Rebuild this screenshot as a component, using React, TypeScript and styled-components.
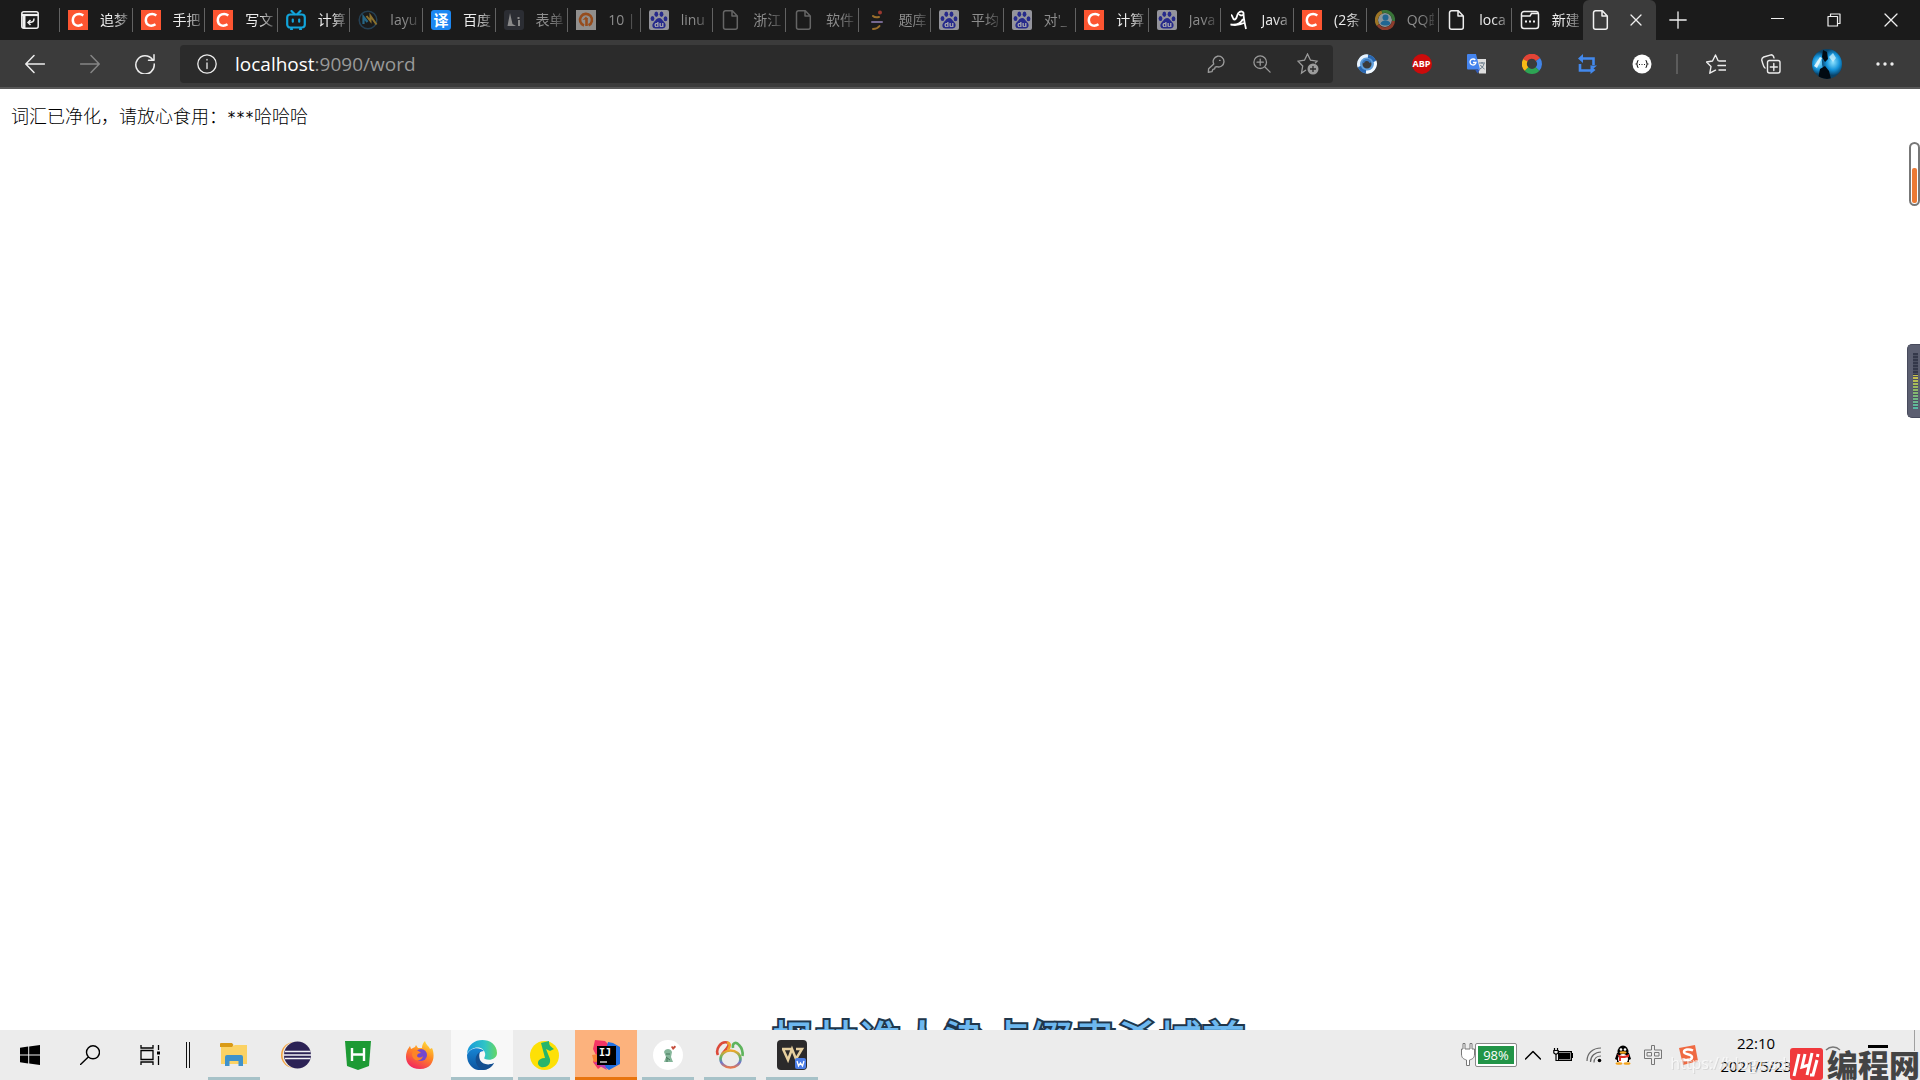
import React from 'react';
import styled, { createGlobalStyle } from 'styled-components';

const cjk = '"Noto Sans CJK SC", sans-serif';
const ui = `"Open Sans", ${cjk}`;

const GlobalStyle = createGlobalStyle`
  * { box-sizing: border-box; }
  body { margin: 0; background: #fff; font-family: ${ui}; }
  button { border: 0; padding: 0; background: none; font: inherit; color: inherit; }
  svg { display: block; flex: none; }
`;

const Screen = styled.div`
  display: flex;
  flex-direction: column;
  height: 100vh;
  overflow: hidden;
`;

/* ---------- tab strip ---------- */
const TabStrip = styled.header`
  display: flex;
  flex: none;
  height: 40px;
  background: #1b1b1b;
  color: #f0f0f0;
`;
const StripButton = styled.button<{ $w: number }>`
  width: ${p => p.$w}px;
  height: 40px;
  display: flex;
  align-items: center;
  justify-content: center;
`;
const TabList = styled.div`
  flex: 1;
  min-width: 0;
  display: grid;
  grid-template-columns: repeat(22, minmax(0, 1fr));
`;
const TabButton = styled.button<{ $asleep?: boolean }>`
  display: flex;
  align-items: center;
  gap: 12px;
  padding: 0 4px 0 8px;
  height: 24px;
  margin-top: 8px;
  border-left: 1px solid #626262;
  color: ${p => (p.$asleep ? '#8d8d8d' : '#ededed')};
  svg, i { opacity: ${p => (p.$asleep ? 0.65 : 1)}; }
`;
const TabTitle = styled.span`
  flex: 1;
  min-width: 0;
  overflow: hidden;
  white-space: nowrap;
  text-align: left;
  font-size: 14px;
  line-height: 24px;
  mask-image: linear-gradient(90deg, #000 50%, rgba(0, 0, 0, 0.3));
`;
const ActiveTab = styled.div`
  display: flex;
  align-items: center;
  justify-content: space-between;
  padding: 0 14px 0 8px;
  height: 40px;
  background: #3b3b3b;
  border-radius: 6px 6px 0 0;
`;
const WindowControls = styled.div`
  display: flex;
  width: 264px;
  justify-content: space-between;
`;
const ControlGroup = styled.div`
  display: flex;
`;
const Badge = styled.i<{ $bg: string; $round?: boolean; $size?: number }>`
  flex: none;
  display: flex;
  align-items: center;
  justify-content: center;
  width: 20px;
  height: 20px;
  border-radius: ${p => (p.$round ? '50%' : '3px')};
  background: ${p => p.$bg};
  color: #fff;
  font: normal 700 ${p => p.$size ?? 18}px/20px ${ui};
`;

/* ---------- toolbar ---------- */
const Toolbar = styled.nav`
  display: flex;
  flex: none;
  align-items: center;
  height: 49px;
  padding: 0 7px 0 7px;
  background: #3b3b3b;
  border-bottom: 2px solid #585858;
  color: #ededed;
`;
const ToolButton = styled.button<{ $dim?: boolean; $w?: number }>`
  width: ${p => p.$w ?? 55}px;
  height: 38px;
  display: flex;
  align-items: center;
  justify-content: center;
  color: ${p => (p.$dim ? '#858585' : '#ededed')};
`;
const AddressBar = styled.form`
  flex: 1;
  display: flex;
  align-items: center;
  height: 38px;
  margin: 0 6px 0 8px;
  padding: 0 2px 0 17px;
  border-radius: 4px;
  background: #2b2b2b;
`;
const Url = styled.div`
  flex: 1;
  padding-left: 18px;
  font-size: 19px;
  line-height: 38px;
  color: #999;
`;
const Host = styled.span`
  color: #fff;
`;
const FieldButton = styled(ToolButton)`
  width: 46px;
  color: #9b9b9b;
`;
const Divider = styled.span`
  width: 2px;
  height: 20px;
  margin: 0 10px 0 7px;
  background: #5c5c5c;
`;

/* ---------- page ---------- */
const Page = styled.main`
  position: relative;
  flex: 1;
  overflow: hidden;
  padding: 13px 11px;
  background: #fff;
`;
const Message = styled.p`
  margin: 0;
  font: 300 18px/26px ${cjk};
  color: #000;
`;
const Stars = styled.span`
  font: 15px/20px "DejaVu Sans Mono", monospace;
  vertical-align: text-bottom;
`;
const Lyrics = styled.div`
  position: absolute;
  left: 768px;
  bottom: 0;
  height: 20px;
  overflow: hidden;
  padding: 0 4px;
  white-space: nowrap;
  font: 500 43px/56px ${cjk};
  color: #6db8f0;
  -webkit-text-stroke: 4px #20364b;
  paint-order: stroke fill;
`;
const Gauge = styled.div`
  position: absolute;
  right: 0;
  top: 53px;
  width: 11px;
  height: 64px;
  padding: 24px 1px 1px;
  border: 2px solid #777;
  border-radius: 6px;
`;
const GaugeFill = styled.div`
  height: 100%;
  border-radius: 2px;
  background: #ec7a35;
`;
const Meter = styled.div`
  position: absolute;
  right: 0;
  top: 255px;
  width: 13px;
  height: 74px;
  padding: 8px 2px 8px 5px;
  border-radius: 5px 0 0 5px;
  border: 1px solid #474a5c;
  border-right: 0;
  background: #5b5e70;
`;
const MeterBars = styled.div`
  height: 100%;
  background:
    repeating-linear-gradient(transparent 0 2px, #4c5061 2px 3px),
    linear-gradient(#34384a 0 39%, #c5c04d 39% 45%, #8fb864 65%, #55b9a6);
`;

/* ---------- taskbar ---------- */
const Taskbar = styled.footer`
  position: relative;
  flex: none;
  display: flex;
  height: 50px;
  background: #ececec;
  color: #000;
`;
const SystemButton = styled.button<{ $w?: number }>`
  width: ${p => p.$w ?? 60}px;
  display: flex;
  align-items: center;
  justify-content: center;
`;
const Grip = styled.span`
  align-self: center;
  width: 4px;
  height: 26px;
  margin: 0 13px 0 6px;
  border: solid #111;
  border-width: 0 1px;
`;
const Apps = styled.div`
  flex: 1;
  display: flex;
`;
type AppState = 'idle' | 'open' | 'focus' | 'alert';
const AppButton = styled.button<{ $state: AppState }>`
  position: relative;
  width: 62px;
  display: flex;
  align-items: center;
  justify-content: center;
  background: ${p => (p.$state === 'focus' ? '#f8f8f8' : p.$state === 'alert' ? '#fcb27d' : 'transparent')};
  &::after {
    content: '';
    position: absolute;
    bottom: 0;
    left: ${p => (p.$state === 'open' ? 5 : 0)}px;
    right: ${p => (p.$state === 'open' ? 5 : 0)}px;
    height: ${p => (p.$state === 'idle' ? 0 : 3)}px;
    background: ${p => (p.$state === 'alert' ? '#e8740e' : '#a7c2c8')};
  }
`;
const Tray = styled.div`
  display: flex;
  align-items: center;
`;
const TrayButton = styled.button<{ $w: number }>`
  width: ${p => p.$w}px;
  height: 50px;
  display: flex;
  align-items: center;
  justify-content: center;
`;
const Battery = styled.span`
  display: block;
  width: 40px;
  height: 22px;
  border: 2px solid #fff;
  outline: 1px solid #8a8a8a;
  border-radius: 1px;
  background: #219447;
  color: #fff;
  font-size: 13px;
  line-height: 18px;
  text-align: center;
`;
const Clock = styled.time`
  width: 102px;
  font-size: 15px;
  line-height: 23px;
  text-align: center;
  white-space: nowrap;
`;
const Notifications = styled.div`
  display: flex;
  align-items: flex-start;
  justify-content: space-between;
  width: 107px;
  height: 50px;
  padding: 15px 26px 0 14px;
`;
const ShowDesktop = styled.button`
  width: 6px;
  height: 50px;
  border-left: 1px solid #a0a0a0;
`;
const Watermark = styled.div`
  position: absolute;
  right: 0;
  bottom: 0;
  height: 32px;
  display: flex;
  align-items: center;
  gap: 4px;
  font: 900 31px/32px ${cjk};
  color: #444;
  -webkit-text-stroke: 2px #ececec;
  paint-order: stroke fill;
`;
const FaintLink = styled.span`
  position: absolute;
  right: 124px;
  bottom: 6px;
  font-size: 16px;
  line-height: 22px;
  color: #fff;
  text-shadow: 1px 1px 0 #c9c9c9;
  opacity: 0.6;
`;

/* ---------- icons ---------- */
const Line = ({ d, size = 20, w = 1.4, box = 20 }: { d: string; size?: number; w?: number; box?: number }) => (
  <svg width={size} height={size} viewBox={`0 0 ${box} ${box}`} fill="none" stroke="currentColor" strokeWidth={w} strokeLinejoin="round" strokeLinecap="round">
    <path d={d} />
  </svg>
);
const FileIcon = () => <Line w={1.5} d="M4.5.8h6.8l5 5.200v11.200a2 2 0 0 1-2 2H4.500a2 2 0 0 1-2-2V2.800a2 2 0 0 1 2-2zM11 1v5h5" />;
const CsdnIcon = () => (
  <svg width="20" height="20" viewBox="0 0 20 20">
    <path fill="#fc5531" d="M0 0h20v20H0z" />
    <path d="M15.300 5.500C11.500 2.500 5 4 4.800 10.300c0 5.700 6 6.400 9.700 4" fill="none" stroke="#fff" strokeWidth="2.500" />
  </svg>
);
const BiliIcon = () => (
  <svg width="20" height="20" viewBox="0 0 20 20" fill="none" stroke="#12a4da" strokeWidth="2.200" strokeLinecap="round">
    <rect x="1.200" y="4.500" width="17.600" height="13" rx="3" />
    <path d="M5.500 1l3 3M14.500 1l-3 3M6.800 9.500v2.200M13.200 9.500v2.200M5 19h1M14 19h1" />
  </svg>
);
const LayIcon = () => (
  <svg width="20" height="20" viewBox="0 0 20 20" fill="none">
    <circle cx="10" cy="10" r="8.800" stroke="#2b5573" strokeWidth="1.500" />
    <path d="M5.500 14V7l4 5" stroke="#2d8fc0" strokeWidth="2.200" />
    <path d="M8.500 6l4 5V6l6 8.500" stroke="#c8a038" strokeWidth="2" />
  </svg>
);
const FormIcon = () => (
  <svg width="20" height="20" viewBox="0 0 20 20">
    <rect width="20" height="20" rx="3" fill="#343741" />
    <path d="M3.500 16L6 3l2.500 11 3.500 2zM14 10h2v6h-2zM13.500 7h2v2h-2z" fill="#c4c4c4" />
  </svg>
);
const OrangeIcon = () => (
  <svg width="20" height="20" viewBox="0 0 20 20">
    <path fill="#d0cdca" d="M0 0h20v20H0z" />
    <path d="M8 15.500a6 6 0 1 1 4.500-.2M10.500 8v8" fill="none" stroke="#d9671e" strokeWidth="2.600" />
    <path d="M6.500 10L10 6.500l2 2.500z" fill="#d9671e" />
  </svg>
);
const BaiduIcon = () => (
  <svg width="20" height="20" viewBox="0 0 20 20">
    <rect width="20" height="20" rx="2" fill="#d6d6e2" />
    <g fill="#2d32c8">
      <ellipse cx="3.500" cy="8.500" rx="1.900" ry="2.500" />
      <ellipse cx="7.300" cy="4.300" rx="1.900" ry="2.700" />
      <ellipse cx="12.500" cy="4.300" rx="1.900" ry="2.700" />
      <ellipse cx="16.500" cy="8.700" rx="1.900" ry="2.500" />
      <path d="M10 8c2.500 0 3 2.200 5 4 3 2.600 1.500 6.500-1.500 6.500h-7C3.500 18.500 2 15 5 12c1.800-1.700 2.500-4 5-4z" />
    </g>
    <text x="10" y="17" fontSize="7.500" fontWeight="700" textAnchor="middle" fill="#fff" fontFamily="Open Sans">du</text>
  </svg>
);
const QuizIcon = () => (
  <svg width="20" height="20" viewBox="0 0 20 20" fill="none" strokeWidth="2" strokeLinecap="round">
    <circle cx="13" cy="2.500" r="2" fill="#e04a3c" />
    <path d="M6 6c1.500 1.500 4 1.500 6 1" stroke="#e09d35" />
    <path d="M5 12h10" stroke="#a793d0" />
    <path d="M6 19c3 0 5-1 6.500-3" stroke="#e09d35" />
  </svg>
);
const JavaIcon = () => (
  <svg width="20" height="20" viewBox="0 0 20 20" fill="none" stroke="#fff" strokeWidth="1.800">
    <path d="M2 5c2 0 1 4.500 3.500 4.500C8 9.500 7.500 5 9.500 3c2-2.500 5.500-1.500 5 .8-.3 2.200-4 2.200-4 .2M14.500 3c0 6 1.500 11 2.500 16M14 9c-2 4-6 6.500-12.500 5.500 4.500 1.500 9.500.5 14.500-2" />
  </svg>
);
const QqBrowserIcon = () => (
  <svg width="20" height="20" viewBox="0 0 20 20" fill="none">
    <circle cx="10" cy="10" r="7" fill="#c9d8dd" />
    <path d="M3 15A8.500 8.500 0 0 1 7 2" stroke="#e4a62b" strokeWidth="3" />
    <path d="M7 2a8.500 8.500 0 0 1 11.500 9" stroke="#48a447" strokeWidth="3" />
    <path d="M3 15a8.500 8.500 0 0 0 15.500-4" stroke="#c94f35" strokeWidth="3" />
    <circle cx="10.500" cy="7.500" r="3" fill="#258ed0" /><path d="M5.500 14c0-4 9-5 10 0-3 2-7 2-10 0z" fill="#258ed0" />
  </svg>
);
const NewTabIcon = () => (
  <svg width="20" height="20" viewBox="0 0 20 20" fill="none" stroke="currentColor" strokeWidth="1.500">
    <path d="M4 1.500h12.500a2.500 2.500 0 0 1 2 2.500v12a2.500 2.500 0 0 1-2.500 2.500H4A2.500 2.500 0 0 1 1.500 16V4A2.500 2.500 0 0 1 4 1.500zM1.500 6H10l1.500-2.500h6.500" />
    <path d="M5 11.500h2M9 11.500h2M13 11.500h2" strokeWidth="2" />
  </svg>
);
const SwirlIcon = () => (
  <svg width="20" height="20" viewBox="0 0 20 20" fill="none">
    <circle cx="10" cy="10" r="7" stroke="#5f9edb" strokeWidth="5" />
    <path d="M2 13C0 7 5 1 11 2" stroke="#e6f3ff" strokeWidth="3" />
    <path d="M18 7c2 6-3 12-9 11" stroke="#f4faff" strokeWidth="3" />
    <path d="M11 2.500c3 0 5.500 2 6.500 5M9 17.500c-3 0-5.500-2-6.500-5" stroke="#2a67b1" strokeWidth="3" />
    <path d="M6 9c1-3.500 6-4 7.500-.5" stroke="#3a79c0" strokeWidth="2" />
  </svg>
);
const TranslateIcon = () => (
  <svg width="20" height="20" viewBox="0 0 20 20">
    <path d="M9 5h10v14.500h-7z" fill="#dedede" />
    <path d="M12 9h6M15 8v1.500M17 9.500c-.5 3-2.500 4.500-4 5.500M13.500 11c1 2 2.500 3 4 4" stroke="#647787" fill="none" />
    <path d="M1 0h8l4 15.500H1a1 1 0 0 1-1-1V1a1 1 0 0 1 1-1z" fill="#4484ee" />
    <path d="M8 15.500h5l-2.500 4z" fill="#3059b5" />
    <path d="M8.300 6A3 3 0 1 0 9 8.500H6" stroke="#fff" strokeWidth="1.300" fill="none" />
  </svg>
);
const RingIcon = () => (
  <svg width="20" height="20" viewBox="0 0 20 20" fill="none" strokeWidth="5">
    <path d="M3 6.500A7.500 7.500 0 0 1 16 5.500" stroke="#e34436" />
    <path d="M16 5.500A7.500 7.500 0 0 1 15.500 15" stroke="#4285e8" />
    <path d="M15.500 15A7.500 7.500 0 0 1 4.500 15" stroke="#2da554" />
    <path d="M4.500 15A7.500 7.500 0 0 1 3.300 6.300" stroke="#f7bb16" />
  </svg>
);
const LoopIcon = () => (
  <svg width="20" height="20" viewBox="0 0 20 20" fill="none" stroke="#4389ed" strokeWidth="2.600">
    <path d="M3 10v6.500h11M4 4.500h12.500V11" />
    <path d="M6 0v9L1 4.500zM13.500 12v8l5-4zM13 11.500h7l-3.500 3z" fill="#4389ed" stroke="none" />
  </svg>
);
const Avatar = () => (
  <svg width="30" height="30" viewBox="0 0 30 30">
    <defs>
      <clipPath id="face"><circle cx="15" cy="15" r="15" /></clipPath>
      <radialGradient id="sky"><stop stopColor="#8fe3ff" /><stop offset=".6" stopColor="#1694da" /><stop offset="1" stopColor="#0a4a75" /></radialGradient>
    </defs>
    <g clipPath="url(#face)">
      <path fill="#0b4468" d="M0 0h30v30H0z" />
      <ellipse cx="7" cy="14" rx="10" ry="11" fill="url(#sky)" />
      <ellipse cx="21" cy="13" rx="11" ry="13" fill="url(#sky)" />
      <path d="M11 1l4 2 1 7-3 3-3-5zM6 30l2-10 5-3 4 5 2 8z" fill="#020a12" />
      <path d="M2 17l6-9 2 1-5 10z" fill="#e9faff" opacity=".9" />
      <path d="M17 8l4-4 3 5-3 4z" fill="#d5f5ff" opacity=".7" />
    </g>
  </svg>
);

const FolderIcon = () => (
  <svg width="28" height="26" viewBox="0 0 28 26">
    <path d="M1 4h12l2-1h12v19H1z" fill="#fbd264" />
    <path d="M0 2a1 1 0 0 1 1-1h11l1.500 2L12 5H0z" fill="#d99a16" />
    <path d="M5 24V15a2 2 0 0 1 2-2h14a2 2 0 0 1 2 2v9h-4.500v-5h-9v5z" fill="#3f92cb" />
  </svg>
);
const EclipseIcon = () => (
  <svg width="30" height="28" viewBox="0 0 30 28">
    <circle cx="13" cy="14" r="13" fill="#f3a03a" /><circle cx="15" cy="14" r="13.500" fill="#ece6df" />
    <circle cx="16.500" cy="14" r="13.500" fill="#2c2255" />
    <path d="M4 10.500h25.500M3 14h27M4 17.500h25.500" stroke="#f2f2f7" strokeWidth="1.600" />
  </svg>
);
const HIcon = () => (
  <svg width="26" height="30" viewBox="0 0 26 30">
    <path d="M0 1h26l-2 25-11 4-11-4z" fill="#1d9a34" /><path d="M7 8v13M19 8v13M7 14.500h12" stroke="#fff" strokeWidth="2.400" fill="none" />
  </svg>
);
const FirefoxIcon = () => (
  <svg width="29" height="29" viewBox="0 0 29 29">
    <defs><linearGradient id="ff" x1=".8" y1="0" x2=".3" y2="1"><stop stopColor="#ffe13d" /><stop offset=".45" stopColor="#ff8a22" /><stop offset="1" stopColor="#f22460" /></linearGradient></defs>
    <path d="M4 5l1 3 4-2 1-2 2 3h4c0-3 1-5 3-7 1 4 4 5 5 8l2-1c3 6 3 21-12 21S-2 15 2 8z" fill="url(#ff)" />
    <circle cx="15" cy="14" r="6" fill="#7446cf" /><path d="M7 10c4-2 6 0 8 2-2 0-4 1-4 3 1 2 4 2 6 0-1 6-11 6-11-2z" fill="#fd8526" />
  </svg>
);
const EdgeIcon = () => (
  <svg width="30" height="30" viewBox="0 0 30 30">
    <defs>
      <linearGradient id="ea"><stop stopColor="#1999dc" /><stop offset=".6" stopColor="#2fc4c6" /><stop offset="1" stopColor="#67d763" /></linearGradient>
      <linearGradient id="eb" x2="0" y2="1" x1="0" y1="0"><stop stopColor="#1686d5" /><stop offset="1" stopColor="#0e529d" /></linearGradient>
    </defs>
    <path d="M0 14C1-5 30-4 30 13c0 6-7 8-12 6-2-1 1-2 0-6C16 5 4 6 0 14z" fill="url(#ea)" />
    <path d="M0 15C2 8 12 6 17 11c-6 0-8 7-4 11s9 4 14 1C19 35 0 32 0 15z" fill="url(#eb)" />
    <path d="M13 12c-7 4-5 15 3 18 5 0 9-3 11-7-6 3-12 1-14-3-1-3-1-6 0-8z" fill="#144f91" />
  </svg>
);
const MusicIcon = () => (
  <svg width="29" height="29" viewBox="0 0 29 29">
    <circle cx="14.500" cy="14.500" r="14.500" fill="#fde006" />
    <path d="M11 2l8-2c0 4 1 5 5 8l-4 2-4-2 4 10c1 6-4 9-9 8-5-2-4-9 4-9z" fill="#27b56b" />
  </svg>
);
const IdeaIcon = () => (
  <svg width="30" height="30" viewBox="0 0 30 30">
    <path d="M4 0l10 1 6 6-4 15-9 7-5-7 3-7-3-6z" fill="#f43665" /><path d="M1 15l7-1 3 7-8 1z" fill="#f78434" />
    <path d="M17 2l5 1 7 4v17l-11 6-7-5z" fill="#216fe2" /><path d="M3 23l9-2 4 9z" fill="#ba3fb2" />
    <path d="M6 6h19v19H6z" /><path d="M9 22h7" stroke="#fff" strokeWidth="1.200" />
    <text x="8" y="15.500" fontFamily="DejaVu Sans Mono" fontWeight="700" fontSize="10" fill="#fff">IJ</text>
  </svg>
);
const DinoIcon = () => (
  <svg width="30" height="30" viewBox="0 0 30 30">
    <circle cx="15" cy="15" r="15" fill="#fff" /><path d="M11 12c1-4 7-4 8 0l-1 5 2 5h-9l2-5z" fill="#85b69a" />
    <path d="M13 14h4M13 17l4 3M14 22v-4" stroke="#47765b" /><path d="M18 7l2 3 3-3c-1-2-2-1-2.500 0-.5-1-2-1-2.500 0z" fill="#c54d3c" />
  </svg>
);
const LoopsIcon = () => (
  <svg width="30" height="30" viewBox="0 0 30 30" fill="none" strokeWidth="2.600">
    <defs><linearGradient id="rb" x1="0" y1="0" x2="0" y2="1"><stop stopColor="#f2a62b" /><stop offset=".45" stopColor="#58b56b" /><stop offset=".7" stopColor="#6f76cf" /><stop offset="1" stopColor="#e8794f" /></linearGradient></defs>
    <path d="M3 15C0 9 6 1 12 2.500c4 1.500 0 6-5 11.500" stroke="#dc4a3a" /><path d="M12 2.500c4 1 3 4 1 7" stroke="#eda12e" />
    <path d="M18 8c-1-5 3-7 6-3 3 3 4 7 3.500 11" stroke="#5eb45c" /><ellipse cx="15.500" cy="19" rx="10" ry="8.500" stroke="url(#rb)" />
  </svg>
);
const WpsIcon = () => (
  <svg width="30" height="30" viewBox="0 0 30 30">
    <rect width="30" height="30" rx="4" fill="#2b2a2b" />
    <path d="M5 9h9M6 9l5 11 4-11 4 10 6-10h-6" fill="none" stroke="#e6cf9f" strokeWidth="2.500" />
    <rect x="18" y="18" width="11" height="11" rx="2" fill="#4b7de6" /><path d="M20 21l1.500 5 2-3 2 3L27 21" stroke="#fff" fill="none" strokeWidth="1.300" />
  </svg>
);
const QqIcon = () => (
  <svg width="18" height="20" viewBox="0 0 18 20">
    <ellipse cx="9" cy="7" rx="5.500" ry="6.500" /><path d="M3 8L1 14l2 1v2h12v-2l2-1-2-6z" />
    <ellipse cx="9" cy="14" rx="5" ry="5" fill="#fff" /><circle cx="7" cy="4.500" r="1.300" fill="#fff" /><circle cx="11" cy="4.500" r="1.300" fill="#fff" />
    <ellipse cx="9" cy="7.500" rx="3.500" ry="1.200" fill="#f5a51f" /><path d="M3 9c4 2.500 8 2.500 12 0v3c-3 1-6 1-8 1v3H5v-4z" fill="#df2d24" />
    <ellipse cx="5" cy="18.500" rx="3.500" ry="1.300" fill="#f5a51f" /><ellipse cx="13" cy="18.500" rx="3.500" ry="1.300" fill="#f5a51f" />
  </svg>
);

const tabs: { title: string; icon: React.ReactNode; asleep?: boolean }[] = [
  { title: '追梦', icon: <CsdnIcon /> },
  { title: '手把', icon: <CsdnIcon /> },
  { title: '写文', icon: <CsdnIcon /> },
  { title: '计算', icon: <BiliIcon /> },
  { title: 'layu', icon: <LayIcon />, asleep: true },
  { title: '百度', icon: <Badge $bg="#1c87f2" $size={15}>译</Badge> },
  { title: '表单', icon: <FormIcon />, asleep: true },
  { title: '10 |', icon: <OrangeIcon />, asleep: true },
  { title: 'linu', icon: <BaiduIcon />, asleep: true },
  { title: '浙江', icon: <FileIcon />, asleep: true },
  { title: '软件', icon: <FileIcon />, asleep: true },
  { title: '题库', icon: <QuizIcon />, asleep: true },
  { title: '平均', icon: <BaiduIcon />, asleep: true },
  { title: "对'_", icon: <BaiduIcon />, asleep: true },
  { title: '计算', icon: <CsdnIcon /> },
  { title: 'Java', icon: <BaiduIcon />, asleep: true },
  { title: 'Java', icon: <JavaIcon /> },
  { title: '(2条', icon: <CsdnIcon /> },
  { title: 'QQ邮', icon: <QqBrowserIcon />, asleep: true },
  { title: 'loca', icon: <FileIcon /> },
  { title: '新建', icon: <NewTabIcon /> },
];

const extensions: [string, React.ReactNode][] = [
  ['同步', <SwirlIcon />],
  ['广告拦截', <Badge $bg="#cc0b0b" $round $size={9}>ABP</Badge>],
  ['翻译', <TranslateIcon />],
  ['搜索', <RingIcon />],
  ['转换', <LoopIcon />],
  ['JSON', (
    <svg width="20" height="20" viewBox="0 0 20 20">
      <circle cx="10" cy="10" r="9.500" fill="#fff" />
      <path d="M6.500 6.500c-2 0-.5 3-2 3.500 1.500.5 0 3.500 2 3.500M13.500 6.500c2 0 .5 3 2 3.500-1.500.5 0 3.500-2 3.500M7 10.500h1M9.500 10.500h1M12 10.500h1" fill="none" stroke="#222" strokeWidth="1.200" />
    </svg>
  )],
];

const apps: [string, AppState, React.ReactNode][] = [
  ['文件资源管理器', 'open', <FolderIcon />],
  ['Eclipse', 'idle', <EclipseIcon />],
  ['HBuilder', 'idle', <HIcon />],
  ['Firefox', 'idle', <FirefoxIcon />],
  ['Edge', 'focus', <EdgeIcon />],
  ['QQ音乐', 'open', <MusicIcon />],
  ['IntelliJ IDEA', 'alert', <IdeaIcon />],
  ['Dino', 'open', <DinoIcon />],
  ['Navicat', 'open', <LoopsIcon />],
  ['WPS', 'open', <WpsIcon />],
];

export default function App() {
  return (
    <Screen>
      <GlobalStyle />
      <TabStrip>
        <StripButton $w={59} aria-label="标签操作">
          <svg width="18" height="18" viewBox="0 0 18 18" fill="none" stroke="currentColor" strokeWidth="1.500">
            <rect x=".8" y=".8" width="16.400" height="16.400" rx="2" /><path d="M1 4h16" strokeWidth="2.200" /><path d="M3 5v12" strokeWidth="3" />
            <path d="M13 7.500c0 3-1 4-6 4M9.500 9L7 11.500 9.500 14" />
          </svg>
        </StripButton>
        <TabList>
          {tabs.map((t, i) => (
            <TabButton key={i} $asleep={t.asleep}>{t.icon}<TabTitle>{t.title}</TabTitle></TabButton>
          ))}
          <ActiveTab>
            <FileIcon />
            <button aria-label="关闭标签页"><Line size={12} box={12} w={1.3} d="M1 1l10 10M11 1L1 11" /></button>
          </ActiveTab>
        </TabList>
        <WindowControls>
          <StripButton $w={44} aria-label="新建标签页"><Line size={18} box={18} w={1.3} d="M9 .8v16.400M.8 9h16.400" /></StripButton>
          <ControlGroup>
            <StripButton $w={55} aria-label="最小化"><Line size={13} box={13} w={1.2} d="M0 4.500h13" /></StripButton>
            <StripButton $w={57} aria-label="还原"><Line size={14} box={14} w={1.2} d="M1 3.500h9.500V13H1zM3.500 3.500V1H13v9.500h-2.500" /></StripButton>
            <StripButton $w={58} aria-label="关闭"><Line size={14} box={14} w={1.3} d="M1 1l12 12M13 1L1 13" /></StripButton>
          </ControlGroup>
        </WindowControls>
      </TabStrip>

      <Toolbar>
        <ToolButton aria-label="后退"><Line w={1.5} d="M19.500 10H1M9 1.500L.8 10 9 18.500" /></ToolButton>
        <ToolButton $dim aria-label="前进"><Line w={1.5} d="M.5 10H19M11 1.500l8.200 8.500-8.200 8.500" /></ToolButton>
        <ToolButton aria-label="刷新"><Line w={1.5} d="M17.500 5.500A9.200 9.200 0 1 0 19.200 10M19 .8v5.400h-5.500" /></ToolButton>
        <AddressBar>
          <Line w={1.3} d="M10 .8a9.200 9.200 0 1 1 0 18.400A9.200 9.200 0 0 1 10 .8zM10 9v5.500M10 5.500v.5" />
          <Url><Host>localhost</Host>:9090/word</Url>
          <FieldButton type="button" aria-label="密码"><Line size={18} w={1.5} d="M7.500 10A6 6 0 1 1 11 13l-2 .5-.5 2-2 .5-1 2.500-4 .7.300-4zM14 6h.5" /></FieldButton>
          <FieldButton type="button" aria-label="缩放"><Line size={18} w={1.4} d="M8 1a7 7 0 1 1 0 14A7 7 0 0 1 8 1zM13 13l6 6M8 4.500v7M4.500 8h7" /></FieldButton>
          <FieldButton type="button" aria-label="收藏">
            <svg width="22" height="22" viewBox="0 0 22 22" fill="none" stroke="currentColor" strokeWidth="1.300">
              <path d="M9 17l-4.500 3 1.200-7L1 8.200l6.500-1L10.500 1l3 6.200 6.500 1-2 2" /><circle cx="16" cy="16" r="5.500" fill="currentColor" stroke="none" />
              <path d="M16 13v6M13 16h6" stroke="#2b2b2b" />
            </svg>
          </FieldButton>
        </AddressBar>
        {extensions.map(([name, icon]) => <ToolButton key={name} aria-label={name}>{icon}</ToolButton>)}
        <Divider />
        <ToolButton aria-label="收藏夹"><Line w={1.4} d="M12 6.500L9.500 1 6.500 7l-6 1 4.500 4.500-1.200 6.700 5.700-3M13 7h7M12 11.500h8M13 16h7" /></ToolButton>
        <ToolButton aria-label="集锦"><Line w={1.4} d="M8 6.500h9a2 2 0 0 1 2 2v8.500a2 2 0 0 1-2 2H8.500a2 2 0 0 1-2-2V8.500a2 2 0 0 1 2-2zM12.800 9.500v7M9.300 13h7M4 14c-1.500-1-1.500-2-3.300-8 0-2 .8-2.500 2-3L10 .8c2 0 2.500 1 3 3" /></ToolButton>
        <ToolButton $w={58} aria-label="个人资料"><Avatar /></ToolButton>
        <ToolButton $w={57} aria-label="更多">
          <svg width="18" height="4" viewBox="0 0 18 4" fill="currentColor"><circle cx="2" cy="2" r="1.700" /><circle cx="9" cy="2" r="1.700" /><circle cx="16" cy="2" r="1.700" /></svg>
        </ToolButton>
      </Toolbar>

      <Page>
        <Message>词汇已净化，请放心食用：<Stars>***</Stars>哈哈哈</Message>
        <Gauge><GaugeFill /></Gauge>
        <Meter><MeterBars /></Meter>
        <Lyrics>枫林谁人染点缀肃杀城首</Lyrics>
      </Page>

      <Taskbar>
        <SystemButton aria-label="开始">
          <svg width="20" height="20" viewBox="0 0 20 20"><path d="M0 2.700l8.200-1.200v8H0zM9.200 1.400L20 0v9.500H9.200zM0 10.500h8.200v8L0 17.300zM9.200 10.500H20V20L9.200 18.600z" /></svg>
        </SystemButton>
        <SystemButton aria-label="搜索"><Line w={1.4} d="M13 .8a6.500 6.500 0 1 1 0 13 6.500 6.500 0 0 1 0-13zM8.300 12L.5 19.500" /></SystemButton>
        <SystemButton aria-label="任务视图">
          <svg width="20" height="20" viewBox="0 0 20 20" fill="none" stroke="#000" strokeWidth="1.300"><path d="M1 5.500h12v9H1zM1 0v3h12V0M1 20v-3h12v3M18.500 0v5M18.500 11v9" /><path d="M17 6.500h3v3h-3z" fill="#000" stroke="none" /></svg>
        </SystemButton>
        <Grip />
        <Apps>
          {apps.map(([name, state, icon]) => <AppButton key={name} $state={state} aria-label={name}>{icon}</AppButton>)}
        </Apps>
        <Tray>
          <svg width="16" height="26" viewBox="0 0 16 26" fill="#fff" stroke="#777"><path d="M3 7V1.500h2V7h5V1.500h2V7h2.500v5c0 4-2 5-5 6v5.500h-3V18c-3-1-5-2-5-6V7z" /></svg>
          <Battery>98%</Battery>
          <TrayButton $w={34} aria-label="显示隐藏的图标"><Line size={16} box={16} w={1.5} d="M.5 12L8 4.500l7.500 7.500" /></TrayButton>
          <TrayButton $w={26} aria-label="电源">
            <svg width="20" height="14" viewBox="0 0 20 14"><path d="M5 3h14v2h1v5h-1v3H5z" /><path d="M6 4.500h11.500v7H6" fill="none" stroke="#ececec" strokeWidth=".6" /><path d="M1.500 0v2M4.500 0v2M.8 2.500h4.400V5L3 6.500.8 5zM3 6v6.500h3" fill="none" stroke="#000" strokeWidth="1.200" /></svg>
          </TrayButton>
          <TrayButton $w={36} aria-label="网络">
            <svg width="17" height="16" viewBox="0 0 17 16" fill="none" stroke="#666" strokeWidth="1.200"><path d="M1 14C1 6 7 1 15 1M4.500 15C4.500 9 9 5 15 5M8 15.500c0-4 3-6.500 7-6.500" /><circle cx="13.500" cy="13.500" r="1.800" fill="#000" stroke="none" /></svg>
          </TrayButton>
          <TrayButton $w={22} aria-label="QQ"><QqIcon /></TrayButton>
          <TrayButton $w={37} aria-label="输入法">
            <svg width="18" height="20" viewBox="0 0 18 20" fill="none" stroke="#777"><path d="M7.500.5h3V5h7v8.500h-7v6h-3v-6h-7V5h7zM3 7.500h4.500V11H3zM10.500 7.500H15V11h-4.500z" /></svg>
          </TrayButton>
          <TrayButton $w={34} aria-label="搜狗">
            <svg width="20" height="20" viewBox="0 0 20 20"><path d="M1 3l16-3 3 16-15 4z" fill="#ef6a42" /><path d="M15 5.500c-4-2-9-1-9 1.500s8 2 8 5-5 4-9 2" fill="none" stroke="#fff" strokeWidth="2.500" /></svg>
          </TrayButton>
          <Clock>22:10<br />2021/5/23</Clock>
          <Notifications>
            <svg width="20" height="20" viewBox="0 0 20 20" fill="none" stroke="#777" strokeWidth="1.300"><path d="M5 5c4-4 10-4 14 0" /></svg>
            <svg width="20" height="20" viewBox="0 0 20 20"><path d="M0 0h20v3H0z" /></svg>
          </Notifications>
          <ShowDesktop aria-label="显示桌面" />
        </Tray>
        <FaintLink>https://blog.csdn</FaintLink>
        <Watermark>
          <svg width="33" height="32" viewBox="0 0 33 32">
            <rect width="33" height="32" rx="3" fill="#f0393c" />
            <path d="M9 6L4 28M15 6l-3 13 7-2M22 5l-5 22M27 12l-4 15h-3M28 6l-.6 3" fill="none" stroke="#fff" strokeWidth="3" />
          </svg>
          <span>编程网</span>
        </Watermark>
      </Taskbar>
    </Screen>
  );
}
